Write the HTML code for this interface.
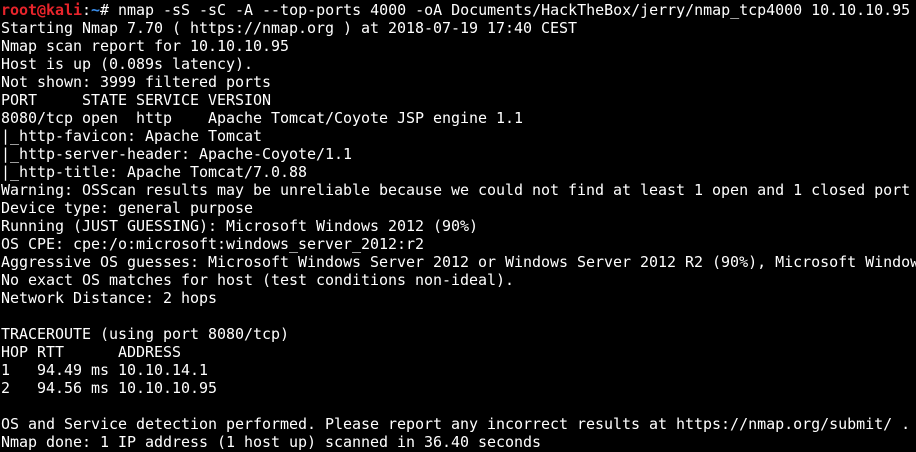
<!DOCTYPE html>
<html><head><style>
html,body{margin:0;padding:0;background:#000;width:916px;height:452px;overflow:hidden}
pre{margin:0;padding:0 0 0 1px;position:absolute;top:1px;left:0;font-family:"DejaVu Sans Mono","Liberation Mono",monospace;font-size:15px;line-height:18px;letter-spacing:-0.03px;color:#fff;white-space:pre}
.r{color:#e8242b;font-weight:bold}.b{color:#3a8dea;font-weight:bold}
</style></head><body><pre><span class="r">root@kali</span>:<span class="b">~</span># nmap -sS -sC -A --top-ports 4000 -oA Documents/HackTheBox/jerry/nmap_tcp4000 10.10.10.95
Starting Nmap 7.70 ( https://nmap.org ) at 2018-07-19 17:40 CEST
Nmap scan report for 10.10.10.95
Host is up (0.089s latency).
Not shown: 3999 filtered ports
PORT     STATE SERVICE VERSION
8080/tcp open  http    Apache Tomcat/Coyote JSP engine 1.1
|_http-favicon: Apache Tomcat
|_http-server-header: Apache-Coyote/1.1
|_http-title: Apache Tomcat/7.0.88
Warning: OSScan results may be unreliable because we could not find at least 1 open and 1 closed port
Device type: general purpose
Running (JUST GUESSING): Microsoft Windows 2012 (90%)
OS CPE: cpe:/o:microsoft:windows_server_2012:r2
Aggressive OS guesses: Microsoft Windows Server 2012 or Windows Server 2012 R2 (90%), Microsoft Windows
No exact OS matches for host (test conditions non-ideal).
Network Distance: 2 hops

TRACEROUTE (using port 8080/tcp)
HOP RTT      ADDRESS
1   94.49 ms 10.10.14.1
2   94.56 ms 10.10.10.95

OS and Service detection performed. Please report any incorrect results at https://nmap.org/submit/ .
Nmap done: 1 IP address (1 host up) scanned in 36.40 seconds</pre></body></html>
